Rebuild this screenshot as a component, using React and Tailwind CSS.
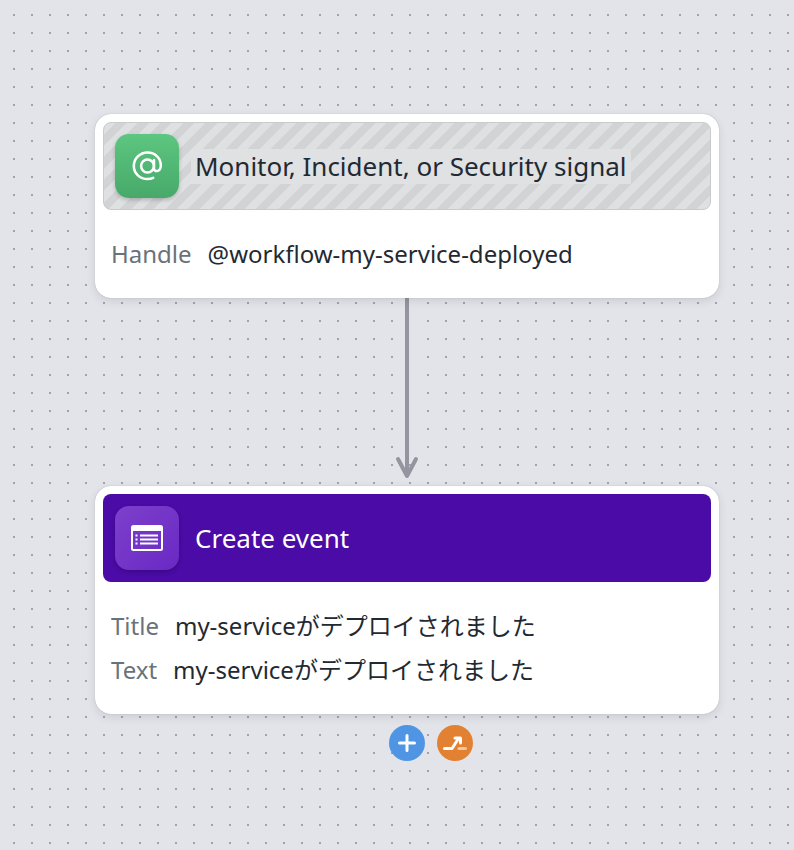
import React from 'react';

function Row({ label, value }) {
  return (
    <div className="flex items-center gap-4 h-[44px] px-2 text-[24px] leading-[32px]">
      <span className="text-[#6a7279]">{label}</span>
      <span className="text-[#1f2a33]">{value}</span>
    </div>
  );
}

function AtIcon() {
  return (
    <svg width="32" height="32" viewBox="0 0 32 32" fill="none" stroke="white" strokeWidth="2.5" strokeLinecap="round">
      <circle cx="16.5" cy="16" r="6.4" />
      <path d="M23 10v9c0 3 6.4 3.2 6.8-3 .4-7.8-5.8-13.5-13.3-13.5C9 2.5 2.8 8.5 2.8 16S9 29 16.5 29c2.2 0 4-.4 5.7-1.2" />
    </svg>
  );
}

function EventIcon() {
  return (
    <svg width="32" height="26" viewBox="0 0 32 26" fill="none">
      <rect x="1" y="1" width="30" height="24" rx="1.5" stroke="white" strokeWidth="2" />
      <rect x="1" y="1" width="30" height="5" fill="white" />
      <path d="M9 10.5h18M9 14.5h18M9 18.5h18" stroke="white" strokeWidth="2" />
      <path d="M4.5 10.5h2M4.5 14.5h2M4.5 18.5h2" stroke="white" strokeWidth="2" />
    </svg>
  );
}

export default function App() {
  return (
    <div className="w-[794px] h-[850px] overflow-hidden flex flex-col items-center pt-[114px] pl-5 bg-[#e2e4ea] bg-[radial-gradient(circle,#a2a3a8_1.1px,transparent_1.2px)] bg-[size:18px_18px] bg-[position:5px_6px] font-['Noto_Sans','Noto_Sans_CJK_JP',sans-serif]">
      {/* trigger card */}
      <div className="relative w-[624px] h-[184px] bg-white rounded-[16px] p-2 shadow-[0_0_1px_rgba(0,0,0,0.3),0_3px_10px_rgba(0,0,0,0.1)]">
        <div className="h-[88px] rounded-[8px] border border-[#c9cacb] flex items-center gap-3 pl-[11px] bg-[repeating-linear-gradient(135deg,#dfe0e1_0,#dfe0e1_8px,#d2d3d4_8px,#d2d3d4_16px)]">
          <div className="w-16 h-16 rounded-[14px] flex items-center justify-center bg-gradient-to-b from-[#5dc680] to-[#47a96a] shadow-[0_2px_4px_rgba(0,0,0,0.2)]">
            <AtIcon />
          </div>
          <span className="text-[26px] leading-[35px] px-1 text-[#1f2a33] bg-[#e0e1e2]">Monitor, Incident, or Security signal</span>
        </div>
        <div className="pt-[22px]">
          <Row label="Handle" value="@workflow-my-service-deployed" />
        </div>
      </div>

      {/* connector */}
      <svg width="30" height="188" viewBox="0 0 30 188" fill="none" stroke="#94959f" strokeWidth="4" strokeLinecap="round" strokeLinejoin="round" className="block">
        <rect x="17" y="0" width="3" height="160" fill="#e2e4ea" stroke="none" />
        <path d="M15 0V178" strokeLinecap="butt" />
        <path d="M6 161L15 178L24 161" />
      </svg>

      {/* action card */}
      <div className="relative w-[624px] h-[228px] bg-white rounded-[16px] p-2 shadow-[0_0_1px_rgba(0,0,0,0.3),0_3px_10px_rgba(0,0,0,0.1)]">
        <div className="h-[88px] rounded-[8px] bg-[#4a0ba6] flex items-center gap-4 pl-3">
          <div className="w-16 h-16 rounded-[14px] flex items-center justify-center bg-gradient-to-br from-[#7d3fcb] to-[#6a28c4] shadow-[0_2px_4px_rgba(0,0,0,0.2)]">
            <EventIcon />
          </div>
          <span className="text-[26px] leading-[36px] text-white">Create event</span>
        </div>
        <div className="pt-[22px]">
          <Row label="Title" value="my-serviceがデプロイされました" />
          <Row label="Text" value="my-serviceがデプロイされました" />
        </div>
      </div>

      {/* add buttons */}
      <div className="flex gap-3 mt-[11px] ml-12">
        <div className="w-9 h-9 rounded-full bg-[#4f95e3] flex items-center justify-center">
          <svg width="20" height="20" viewBox="0 0 20 20" stroke="white" strokeWidth="3" strokeLinecap="round">
            <path d="M10 2.5V17.5M2.5 10H17.5" />
          </svg>
        </div>
        <div className="w-9 h-9 rounded-full bg-[#e38133] flex items-center justify-center">
          <svg width="28" height="28" viewBox="0 0 28 28" fill="none" strokeWidth="3" strokeLinecap="round" strokeLinejoin="round">
            <path d="M3.5 19.5H11L17.5 9.5" stroke="white" />
            <path d="M14 9H19.5V14" stroke="white" />
            <path d="M18 19.5H24.5" stroke="#f4c7a3" />
          </svg>
        </div>
      </div>
    </div>
  );
}
